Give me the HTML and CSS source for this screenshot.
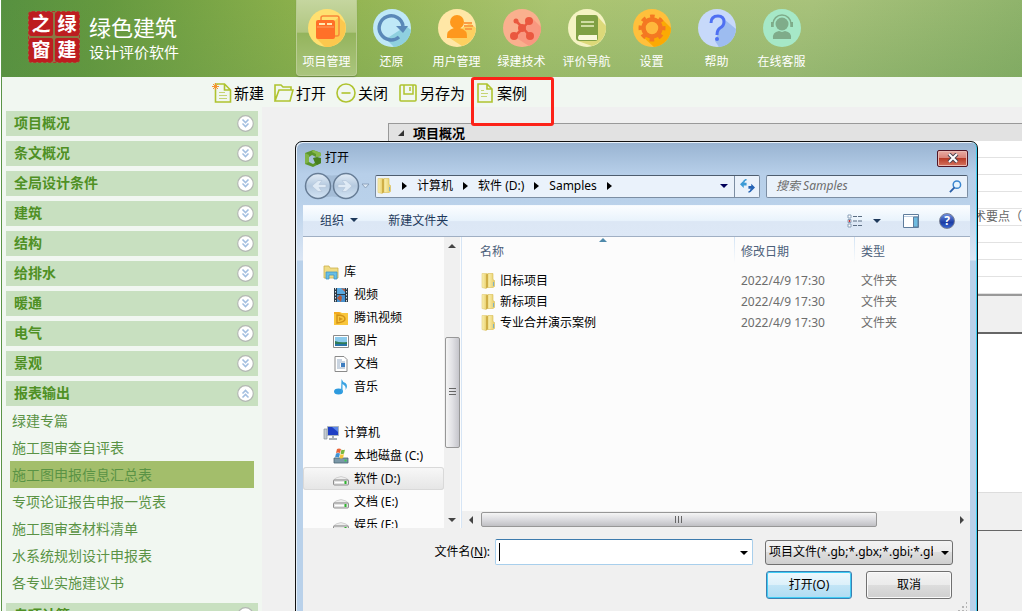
FILE: index.html
```html
<!DOCTYPE html>
<html lang="zh-CN">
<head>
    <meta charset="UTF-8">
    <meta name="viewport" content="width=device-width, initial-scale=1.0">
    <title>绿色建筑设计评价软件</title>
    <link rel="stylesheet" href="styles.css">
</head>
<body>
    <!-- shared icons -->
    <svg class="defs" width="0" height="0" aria-hidden="true">
        <linearGradient id="folderFill" x1="0" x2="1">
            <stop offset="0" stop-color="#fbf2b4"/>
            <stop offset="1" stop-color="#e6cb66"/>
        </linearGradient>
        <linearGradient id="orbFill" x1="0" y1="0" x2="0" y2="1">
            <stop offset="0" stop-color="#e3edf7"/>
            <stop offset="0.5" stop-color="#b4c9df"/>
            <stop offset="1" stop-color="#d4e4f4"/>
        </linearGradient>
        <symbol id="down" viewBox="0 0 17 17">
            <circle cx="8.500" cy="8.500" r="7.800" fill="#fff" stroke="#b4b8b4" stroke-width="1.200"/>
            <path d="M5.500 4.500l3 3 3-3M5.500 8.500l3 3 3-3" fill="none" stroke="#a3bfe0" stroke-width="1.600"/>
        </symbol>
        <symbol id="up" viewBox="0 0 17 17">
            <circle cx="8.500" cy="8.500" r="7.800" fill="#fff" stroke="#b4b8b4" stroke-width="1.200"/>
            <path d="M5.500 8.500l3-3 3 3M5.500 12.500l3-3 3 3" fill="none" stroke="#a3bfe0" stroke-width="1.600"/>
        </symbol>
        <symbol id="folder" viewBox="0 0 16 16">
            <path d="M2 .5h5v14l-1 1-4-1z" fill="url(#folderFill)" stroke="#e0cb74" stroke-width=".6"/>
            <path d="M8 .5h5v6l1.500 1v6l-1.500 1H8z" fill="url(#folderFill)" stroke="#d9bc52" stroke-width=".6"/>
            <path d="M6 1.500l2-1v14l-2 1z" fill="#cfae46"/>
            <path d="M13.500 9v4" stroke="#7fb2c4"/>
        </symbol>
        <symbol id="drive" viewBox="0 0 16 16">
            <path d="M3 7q5-3 10 0l2.500 2H.5z" fill="#eee" stroke="#bbb" stroke-width=".6"/>
            <rect x=".5" y="9" width="15" height="5" rx="1" fill="#e4e4e4" stroke="#777" stroke-width=".8"/>
            <path d="M2 11.500h9" stroke="#fff"/>
            <path d="M12.500 10v3" stroke="#2db52d" stroke-width="2"/>
        </symbol>
    </svg>

    <div class="app">
        <header class="header">
            <div class="brand">
                <div class="seal"><span>之</span><span>绿</span><span>窗</span><span>建</span></div>
                <div class="brand-text">
                    <div class="brand-name">绿色建筑</div>
                    <div class="brand-sub">设计评价软件</div>
                </div>
            </div>
            <nav class="nav">
                <button type="button" class="nav-item active">
                    <svg viewBox="0 0 38 38"><circle cx="19" cy="19" r="19" fill="#ffe070"/><path d="M31 8l6 6a19 19 0 0 1-20 24l-9-9z" fill="#fcc84e"/><rect x="13" y="7" width="18" height="20" rx="2" fill="none" stroke="#f9873a" stroke-width="1.500"/><rect x="8" y="11" width="19" height="19" rx="2" fill="#ff7028"/><path d="M11 15h6M19 15h5" stroke="#ffe9b0" stroke-width="2"/><path d="M9 18h17" stroke="#fca060"/></svg>
                    <span>项目管理</span>
                </button>
                <button type="button" class="nav-item">
                    <svg viewBox="0 0 38 38"><circle cx="19" cy="19" r="19" fill="#bfe8f7"/><path d="M33 17l5 4a19 19 0 0 1-17 17l-8-8z" fill="#8fd0df"/><path d="M26 28a12 12 0 1 1 4-11" fill="none" stroke="#5a88b8" stroke-width="3.500"/><path d="M23 17h12l-5 7z" fill="#5a88b8"/></svg>
                    <span>还原</span>
                </button>
                <button type="button" class="nav-item">
                    <svg viewBox="0 0 38 38"><circle cx="19" cy="19" r="19" fill="#ffe7a6"/><path d="M32 14l6 5a19 19 0 0 1-14 18l-14-9z" fill="#fdd060"/><circle cx="19" cy="13" r="7" fill="#fe981d"/><path d="M9 29q-1-8 7-10h6q8 2 7 10z" fill="#fe981d"/><path d="M26 14h8M26 17h9M27 20h7" stroke="#fb9d45" stroke-width="2"/></svg>
                    <span>用户管理</span>
                </button>
                <button type="button" class="nav-item">
                    <svg viewBox="0 0 38 38"><circle cx="19" cy="19" r="19" fill="#fab08e"/><path d="M30 10l8 8a19 19 0 0 1-12 19l-14-9z" fill="#f99880"/><path d="M14 13l6 6 7-8M20 19l7 8M20 19l-8 8" fill="none" stroke="#ea583f" stroke-width="2.500"/><g fill="#ea583f"><circle cx="13" cy="12" r="2.500"/><circle cx="26" cy="12" r="4"/><circle cx="19" cy="19" r="4"/><circle cx="11" cy="27" r="4"/><circle cx="27" cy="27" r="4"/></g></svg>
                    <span>绿建技术</span>
                </button>
                <button type="button" class="nav-item">
                    <svg viewBox="0 0 38 38"><circle cx="19" cy="19" r="19" fill="#f5f3c3"/><path d="M30 8l8 9a19 19 0 0 1-14 20l-14-5z" fill="#dcd979"/><rect x="8" y="6" width="22" height="26" rx="3" fill="#80a044"/><path d="M13 13h13M13 17h13" stroke="#e9efc1" stroke-width="1.500"/><path d="M11 26h18v5H11q-2-2 0-5z" fill="#faf8dc"/></svg>
                    <span>评价导航</span>
                </button>
                <button type="button" class="nav-item">
                    <svg viewBox="0 0 38 38"><circle cx="19" cy="19" r="19" fill="#ffc03c"/><path d="M28 9l10 10a19 19 0 0 1-17 19L10 28z" fill="#fbaa04"/><circle cx="19" cy="19" r="8.500" fill="#ffb83c" stroke="#f47822" stroke-width="4.500"/><circle cx="19" cy="19" r="11.500" fill="none" stroke="#f47822" stroke-width="4" stroke-dasharray="4.500 4.530" stroke-dashoffset="2.250"/></svg>
                    <span>设置</span>
                </button>
                <button type="button" class="nav-item">
                    <svg viewBox="0 0 38 38"><circle cx="19" cy="19" r="19" fill="#c7d9fa"/><path d="M26 10l12 10a19 19 0 0 1-17 18l-4-6z" fill="#9dbcf0"/><path d="M13 14q0-7 7-7 6 0 6 6 0 4-4 6-3 2-3 7" fill="none" stroke="#4f70f2" stroke-width="3"/><circle cx="19" cy="30" r="2" fill="#4f70f2"/></svg>
                    <span>帮助</span>
                </button>
                <button type="button" class="nav-item">
                    <svg viewBox="0 0 38 38"><circle cx="19" cy="19" r="19" fill="#a6e8c7"/><circle cx="19" cy="15" r="6.500" fill="#7fac8a"/><path d="M10 18v-3a9 9 0 0 1 18 0v3" fill="none" stroke="#7fac8a" stroke-width="1.500"/><path d="M9 13v5M29 13v5" stroke="#7fac8a" stroke-width="2"/><path d="M10 30q-1-7 6-8l3 1 3-1q7 1 6 8z" fill="#7fac8a"/></svg>
                    <span>在线客服</span>
                </button>
            </nav>
        </header>

        <div class="toolbar">
            <button type="button" class="tool">
                <svg viewBox="0 0 20 20"><path d="M3.500 1h9l6 6v12h-15zM12.500 1v6h6" fill="none" stroke="#afc32f" stroke-width="1.600"/><path d="M7 9.500h6M7 12.500h8M7 15.500h8" stroke="#c6d472"/><path d="M3.500 0v7M0 3.500h7M1 1l5 5M6 1L1 6" stroke="#f59331"/></svg>
                <span>新建</span>
            </button>
            <button type="button" class="tool">
                <svg viewBox="0 0 20 20"><path d="M1 18V2h6l2 2h8v3M1 18l4-11h14l-3 11z" fill="none" stroke="#afc32f" stroke-width="1.600"/></svg>
                <span>打开</span>
            </button>
            <button type="button" class="tool">
                <svg viewBox="0 0 20 20"><circle cx="10" cy="10" r="9" fill="none" stroke="#afc32f" stroke-width="1.600"/><path d="M5.500 10h9" stroke="#afc32f" stroke-width="1.600"/></svg>
                <span>关闭</span>
            </button>
            <button type="button" class="tool">
                <svg viewBox="0 0 20 20"><rect x="2" y="2" width="16" height="16" rx="1" fill="none" stroke="#afc32f" stroke-width="1.600"/><path d="M6 2v9h9V2M12 4v4" fill="none" stroke="#afc32f" stroke-width="1.500"/></svg>
                <span>另存为</span>
            </button>
            <button type="button" class="tool marked">
                <svg viewBox="0 0 20 20"><path d="M3 1h9l5 5v13H3zM12 1v5h5" fill="none" stroke="#afc32f" stroke-width="1.600"/><path d="M6 10.500h7M6 13.500h6M6 7.500h3" stroke="#c6d472"/></svg>
                <span>案例</span>
            </button>
        </div>

        <div class="content">
            <aside class="sidebar">
                <button type="button" class="group">项目概况<svg><use href="#down"/></svg></button>
                <button type="button" class="group">条文概况<svg><use href="#down"/></svg></button>
                <button type="button" class="group">全局设计条件<svg><use href="#down"/></svg></button>
                <button type="button" class="group">建筑<svg><use href="#down"/></svg></button>
                <button type="button" class="group">结构<svg><use href="#down"/></svg></button>
                <button type="button" class="group">给排水<svg><use href="#down"/></svg></button>
                <button type="button" class="group">暖通<svg><use href="#down"/></svg></button>
                <button type="button" class="group">电气<svg><use href="#down"/></svg></button>
                <button type="button" class="group">景观<svg><use href="#down"/></svg></button>
                <button type="button" class="group">报表输出<svg><use href="#up"/></svg></button>
                <ul class="reports">
                    <li><a href="#">绿建专篇</a></li>
                    <li><a href="#">施工图审查自评表</a></li>
                    <li><a href="#" class="selected">施工图申报信息汇总表</a></li>
                    <li><a href="#">专项论证报告申报一览表</a></li>
                    <li><a href="#">施工图审查材料清单</a></li>
                    <li><a href="#">水系统规划设计申报表</a></li>
                    <li><a href="#">各专业实施建议书</a></li>
                </ul>
                <button type="button" class="group">专项计算<svg><use href="#down"/></svg></button>
            </aside>

            <main class="main">
                <div class="props-title"><svg viewBox="0 0 8 8"><path d="M7 1v6H1z" fill="#333"/></svg>项目概况</div>
                <div class="props">
                    <div class="prop"></div>
                    <div class="prop"></div>
                    <div class="prop"></div>
                    <div class="prop"></div>
                    <div class="prop">术要点（</div>
                    <div class="prop"></div>
                    <div class="prop"></div>
                    <div class="prop"></div>
                    <div class="prop"></div>
                </div>
                <div class="props-info"></div>
                <div class="notes"></div>
                <div class="notes-foot"></div>
            </main>
        </div>
    </div>

    <!-- file open dialog -->
    <section class="dialog" role="dialog" aria-labelledby="dialogTitle">
        <div class="titlebar">
            <svg viewBox="0 0 18 18"><path d="M1 4l8-3 8 3v3l-5 1-4-2-3 2v5l4 2 3-2v-2h5v3l-8 4-8-3z" fill="#5c962c"/><path d="M1 4l4 2v7l-4 2z" fill="#7fb347"/><path d="M9 1l8 3v3l-5 1V5L8 3z" fill="#86b94a"/><path d="M9 9l4-1 4 1v5l-4 2-2-2z" fill="#47801f"/></svg>
            <span id="dialogTitle">打开</span>
            <button type="button" class="close" aria-label="关闭">
                <svg viewBox="0 0 12 10"><path d="M2 1l8 8M10 1L2 9" stroke="#4b4350" stroke-width="4"/><path d="M2 1l8 8M10 1L2 9" stroke="#fff" stroke-width="2"/></svg>
            </button>
        </div>

        <div class="location">
            <svg class="orbs" viewBox="0 0 64 28">
                <path d="M14 1q14 5 28 0v26q-14-5-28 0z" fill="#a5bdd7"/>
                <circle cx="14" cy="14" r="12.500" fill="url(#orbFill)" stroke="#677d96" stroke-width="1.500"/>
                <circle cx="42" cy="14" r="12.500" fill="url(#orbFill)" stroke="#677d96" stroke-width="1.500"/>
                <path d="M22 12.500h-7l3-4h-4l-6 5.500 6 5.500h4l-3-4h7z" fill="#dfeaf5" stroke="#b4c6da" stroke-width=".7"/>
                <path d="M34 12.500h7l-3-4h4l6 5.500-6 5.500h-4l3-4h-7z" fill="#dfeaf5" stroke="#b4c6da" stroke-width=".7"/>
                <path d="M58 12h7l-3.500 4z" fill="#dce8f4" stroke="#8298b2" stroke-width=".8"/>
            </svg>
            <div class="address">
                <svg class="icon"><use href="#folder"/></svg>
                <i class="crumb-arrow"></i><a href="#">计算机</a>
                <i class="crumb-arrow"></i><a href="#">软件 (D:)</a>
                <i class="crumb-arrow"></i><a href="#">Samples</a>
                <i class="crumb-arrow"></i>
                <i class="caret address-caret"></i>
                <button type="button" class="refresh" aria-label="刷新">
                    <svg viewBox="0 0 16 14"><path d="M0 5l4-4v2.500h3v3H4V9z" fill="#3c9bd6"/><path d="M4 3.500q0-3 3-3.500" fill="none" stroke="#3c9bd6" stroke-width="1.500"/><path d="M16 8.500l-4-4v2.500H9v3h3v2.500z" fill="#2563b5"/><path d="M12 10q0 3-3 3.500" fill="none" stroke="#2563b5" stroke-width="1.500"/></svg>
                </button>
            </div>
            <div class="search">
                <input type="text" placeholder="搜索 Samples" aria-label="搜索 Samples">
                <svg viewBox="0 0 14 14"><circle cx="8.500" cy="5" r="4" fill="#e7f4fd" stroke="#3a86cf" stroke-width="1.600"/><path d="M6 8l-5 5" stroke="#2a5fa8" stroke-width="2"/></svg>
            </div>
        </div>

        <div class="commands">
            <button type="button">组织 <i class="caret"></i></button>
            <button type="button">新建文件夹</button>
            <span class="spacer"></span>
            <button type="button" class="views" aria-label="更改视图">
                <svg viewBox="0 0 16 14"><path d="M1 1h3v3H1zM1 5.500h3v3H1zM1 10h3v3H1z" fill="#fff" stroke="#8aa0b8"/><path d="M2 6.500h1v1H2z" fill="#c33" stroke="#c33"/><path d="M6 2.500h4M11 2.500h4M6 7h4M11 7h4M6 11.500h4M11 11.500h4" stroke="#5b6d82"/></svg>
                <i class="caret"></i>
            </button>
            <button type="button" aria-label="显示预览窗格">
                <svg viewBox="0 0 16 14"><path d="M.5 .5h15v13H.5z" fill="#fff" stroke="#5f7c9c"/><path d="M1 2.500h14" stroke="#b9cbe0"/><path d="M10.500 3h4.500v10h-4.500z" fill="#6ebbe0" stroke="#5f7c9c"/></svg>
            </button>
            <button type="button" class="help" aria-label="帮助">?</button>
        </div>

        <div class="browser">
            <div class="tree">
                <ul class="nodes">
                    <li class="root"><svg class="icon" viewBox="0 0 16 16"><path d="M1 2h5l1 2h8v10H1z" fill="#efdc85" stroke="#cdb04a" stroke-width=".8"/><path d="M3 15V8h11v7h-3v-4H6v4z" fill="#67bfe6" stroke="#4394c4" stroke-width=".8"/></svg>库</li>
                    <li><svg class="icon" viewBox="0 0 16 16"><path d="M1 1h14v14H1z" fill="#2d3b47"/><path d="M4 1h8v6H4z" fill="#58a9e2"/><path d="M4 8h8v7H4z" fill="#4591d0"/><path d="M4 11l3-3 2 2-1 5zM8 1l4 4V2z" fill="#b65a3a"/><path d="M2.500 1v14M13.500 1v14" stroke="#d9e2e8" stroke-dasharray="1.500 1.500"/></svg>视频</li>
                    <li><svg class="icon" viewBox="0 0 16 16"><path d="M1 2h6l2 1h6v12H1z" fill="#f9c63c"/><path d="M1 2h5l2 2H1z" fill="#f4ab1e"/><path d="M4 5q8 0 8 4 0 3-8 4z" fill="none" stroke="#d39418" stroke-width="1.500"/><path d="M6 7l4 2-4 2z" fill="#d39418"/></svg>腾讯视频</li>
                    <li><svg class="icon" viewBox="0 0 16 16"><path d="M.5 2.500h15v12H.5z" fill="#fff" stroke="#8b8b8b"/><path d="M2 4h12v9H2z" fill="#8ccbed"/><path d="M2 8q5 2 12 1v2H2z" fill="#2f7c58"/><path d="M2 11h12v2H2z" fill="#2874a8"/></svg>图片</li>
                    <li><svg class="icon" viewBox="0 0 16 16"><path d="M2 .5h9l3 3v12H2z" fill="#fff" stroke="#8a8a8a"/><path d="M4 4h5M4 6h8M4 8h3M4 10h3M4 12h8" stroke="#93a9c2"/><path d="M8 7h4v4H8z" fill="#3d7dc0"/></svg>文档</li>
                    <li><svg class="icon" viewBox="0 0 16 16"><ellipse cx="5.500" cy="12.500" rx="4.500" ry="3" fill="#2d9ade"/><path d="M8.500 0q1 3 4 4 3 3 0 7 1-4-3-6v8H8z" fill="#3aa3e2"/></svg>音乐</li>
                </ul>
                <ul class="nodes">
                    <li class="root"><svg class="icon" viewBox="0 0 16 16"><path d="M1 4h3v10H1z" fill="#c5cbd1" stroke="#88929c" stroke-width=".7"/><path d="M4.500 1.500h11v9h-11z" fill="#1f3fc4" stroke="#aab4be"/><path d="M9 2h6v5z" fill="#5a86e8"/><path d="M9 11h2v2h3v2H6v-2h3z" fill="#a7aeb5"/></svg>计算机</li>
                    <li><svg class="icon" viewBox="0 0 16 16"><path d="M1 10h14v5H1z" fill="#7b98a8" stroke="#4a6474" stroke-width=".8"/><path d="M12.500 11.500v2" stroke="#39cf4c" stroke-width="2"/><path d="M4 1q2-1 4 0L7 5q-2-1-4 0z" fill="#e8653a"/><path d="M8.500 1.500q2 1 3.500 0l-1 4q-2 1-3.500 0z" fill="#78b83e"/><path d="M3 5.500q2-1 4 0L6 9.500q-2-1-4 0z" fill="#3e92d4"/><path d="M7.500 6q2 1 3.500 0l-1 4q-2 1-3.500 0z" fill="#f4c63a"/></svg>本地磁盘 (C:)</li>
                    <li class="current"><svg class="icon"><use href="#drive"/></svg>软件 (D:)</li>
                    <li><svg class="icon"><use href="#drive"/></svg>文档 (E:)</li>
                    <li><svg class="icon"><use href="#drive"/></svg>娱乐 (F:)</li>
                </ul>
            </div>
            <div class="vscroll">
                <i class="arrow-up"></i>
                <div class="thumb"></div>
                <i class="arrow-down"></i>
            </div>
            <div class="files">
                <table>
                    <thead>
                        <tr><th class="col-name">名称<i class="sort"></i></th><th class="col-date">修改日期</th><th>类型</th></tr>
                    </thead>
                    <tbody>
                        <tr><td><div class="file"><svg class="icon"><use href="#folder"/></svg>旧标项目</div></td><td>2022/4/9 17:30</td><td>文件夹</td></tr>
                        <tr><td><div class="file"><svg class="icon"><use href="#folder"/></svg>新标项目</div></td><td>2022/4/9 17:30</td><td>文件夹</td></tr>
                        <tr><td><div class="file"><svg class="icon"><use href="#folder"/></svg>专业合并演示案例</div></td><td>2022/4/9 17:30</td><td>文件夹</td></tr>
                    </tbody>
                </table>
                <div class="hscroll">
                    <i class="arrow-left"></i>
                    <div class="thumb"></div>
                    <i class="arrow-right"></i>
                </div>
            </div>
        </div>

        <form class="footer">
            <div class="row">
                <label for="filename">文件名(<u>N</u>):</label>
                <div class="combo">
                    <input type="text" id="filename" name="filename">
                    <button type="button" aria-label="最近的文件"><i class="caret"></i></button>
                </div>
                <div class="filter">
                    <select name="filter" aria-label="文件类型">
                        <option>项目文件(*.gb;*.gbx;*.gbi;*.gbp)</option>
                    </select>
                    <i class="caret"></i>
                </div>
            </div>
            <div class="row actions">
                <button type="submit" class="btn primary">打开(O)</button>
                <button type="button" class="btn">取消</button>
            </div>
            <i class="grip"></i>
        </form>
    </section>
</body>
</html>
```

FILE: styles.css
```css
*, *::before, *::after {
    box-sizing: border-box;
}
body {
    margin: 0;
    height: 100vh;
    overflow: hidden;
    position: relative;
    font-family: "Noto Sans", "Noto Sans CJK SC", sans-serif;
    font-size: 12px;
    line-height: 16px;
    color: #000;
}
button, input, select {
    font: inherit;
    color: inherit;
    margin: 0;
}
button {
    border: none;
    background: none;
    padding: 0;
}
a {
    color: inherit;
    text-decoration: none;
}
ul {
    list-style: none;
    margin: 0;
    padding: 0;
}
.defs {
    position: absolute;
}
.icon {
    width: 16px;
    height: 16px;
    flex: none;
}

/* application window */
.app {
    display: flex;
    flex-direction: column;
    height: 100%;
    margin-left: 1px;
    border-left: 1px solid #5b9447;
    background: #f1f7f1;
}
.header {
    display: flex;
    flex: none;
    height: 77px;
    background: linear-gradient(rgba(80, 140, 70, 0), rgba(80, 140, 70, 0.2)), linear-gradient(105deg, #579140 0%, #65993f 10%, #8fb24d 30%, #abc470 53%, #a8c27b 78%, #8db26a 100%);
}
.brand {
    display: flex;
    flex: none;
    width: 294px;
    padding: 11px 0 0 26px;
    gap: 9px;
    color: #fff;
}
.seal {
    display: grid;
    grid-template-columns: 24px 24px;
    grid-auto-rows: 24px;
    gap: 2px;
    width: 52px;
    height: 52px;
    padding: 0;
    border: 1px dashed #b4342a;
    border-radius: 4px;
    background: #8a7a45;
}
.seal span {
    background: #bd1d20;
    border-radius: 2px;
    font-size: 19px;
    line-height: 24px;
    font-weight: bold;
    text-align: center;
}
.brand-name {
    font-size: 22px;
    line-height: 32px;
}
.brand-sub {
    font-size: 15px;
    line-height: 18px;
}
.nav {
    display: flex;
    gap: 4px;
}
.nav-item {
    display: flex;
    flex-direction: column;
    align-items: center;
    width: 61px;
    height: 76px;
    padding-top: 9px;
    gap: 7px;
    color: #fff;
    white-space: nowrap;
}
.nav-item svg {
    width: 38px;
    height: 38px;
    flex: none;
}
.nav-item.active {
    border: 1px solid #b9cc93;
    border-top: none;
    border-radius: 0 0 4px 4px;
    background: linear-gradient(#c5d69f 0%, #b0c680 43%, #94b45c 44%, #aac57e 100%);
    box-shadow: 0 1px 1px #6d8c44;
}
.toolbar {
    display: flex;
    flex: none;
    gap: 10px;
    height: 30px;
    padding-left: 210px;
}
.tool {
    display: flex;
    align-items: center;
    gap: 2px;
    font-size: 15px;
    height: 32px;
    position: relative;
}
.tool svg {
    width: 20px;
    height: 20px;
}
.marked::after {
    content: "";
    position: absolute;
    top: 0;
    left: -4px;
    width: 83px;
    height: 49px;
    border: 3px solid #fc2218;
    border-radius: 3px;
}
.content {
    display: flex;
    flex: 1;
    min-height: 0;
}

/* sidebar */
.sidebar {
    width: 260px;
    flex: none;
    padding: 4px 4px 0;
    overflow: hidden;
}
.group {
    display: flex;
    justify-content: space-between;
    align-items: center;
    width: 100%;
    height: 25px;
    margin-bottom: 5px;
    padding: 0 4px 1px 8px;
    background: #c8e0c0;
    color: #4f9024;
    font-size: 14px;
    font-weight: bold;
}
.group svg {
    width: 17px;
    height: 17px;
}
.reports {
    margin: -4px 4px 7px;
    font-size: 14px;
    color: #5a9345;
}
.reports a {
    display: block;
    height: 27px;
    padding-left: 2px;
    line-height: 27px;
}
.reports .selected {
    background: #a3be6b;
}

/* property area */
.main {
    display: flex;
    flex-direction: column;
    flex: 1;
    min-width: 0;
    padding: 16px 0 0 126px;
    background: #f0f0f0;
}
.props-title {
    display: flex;
    align-items: center;
    gap: 8px;
    flex: none;
    height: 18px;
    padding-left: 8px;
    border-top: 1px solid #999;
    border-left: 1px solid #999;
    background: #e2e2e2;
    font-size: 13px;
    line-height: 16px;
    font-weight: bold;
}
.props-title svg {
    width: 8px;
    height: 8px;
}
.props {
    border-bottom: 2px solid #999;
    background: #fff;
}
.prop {
    height: 17px;
    border-bottom: 1px solid #e2e2e2;
    text-align: right;
    color: #666;
}
.props-info {
    flex: none;
    height: 38px;
    border-bottom: 2px solid #666;
}
.notes {
    flex: none;
    height: 159px;
    background: #fff;
    border-bottom: 1px solid #ddd;
}
.notes-foot {
    flex: none;
    height: 38px;
    border-bottom: 1px solid #666;
}

/* dialog */
.dialog {
    position: absolute;
    top: 141px;
    left: 295px;
    right: 44px;
    bottom: -8px;
    display: flex;
    flex-direction: column;
    padding: 0 7px 7px;
    border: 1px solid #111;
    border-radius: 7px;
    background: linear-gradient(#98b3d1 0, #b7cfe9 32px, #b9d1ea 60px, #dbe6f4 118px, #b9d1ea 119px);
    box-shadow: inset 1px 1px 0 #e8f1fa, inset -1px 0 0 #3fd0f2;
}
.titlebar {
    display: flex;
    align-items: center;
    gap: 3px;
    flex: none;
    height: 32px;
    padding-left: 1px;
}
.titlebar > svg {
    width: 18px;
    height: 18px;
}
.close {
    display: flex;
    align-items: center;
    justify-content: center;
    width: 31px;
    height: 17px;
    margin: 0 2px 0 auto;
    border: 1px solid #521525;
    border-radius: 2px;
    background: linear-gradient(#e9aca3 0%, #d98378 48%, #b83c28 50%, #d5745f 100%);
    box-shadow: inset 0 0 0 1px #e9b9b2;
}
.close svg {
    width: 12px;
    height: 10px;
}
.location {
    display: flex;
    align-items: center;
    flex: none;
    height: 31px;
    padding: 0 2px 7px 0;
}
.orbs {
    width: 64px;
    height: 28px;
    margin-right: 7px;
    margin-left: 1px;
    flex: none;
    overflow: visible;
}
.address, .search {
    display: flex;
    align-items: center;
    height: 23px;
    border: 1px solid #7c8ea3;
    border-top-color: #4e5d6e;
    border-radius: 2px;
    background: #eaf2fb;
}
.address {
    flex: 1;
    min-width: 0;
    margin-right: 6px;
    white-space: nowrap;
}
.crumb-arrow {
    margin: 0 10px;
    border: 4px solid transparent;
    border-left: 5px solid #000;
    border-right: none;
}
.caret {
    display: inline-block;
    border: 4px solid transparent;
    border-top: 4px solid currentColor;
    border-bottom: none;
}
.address-caret {
    margin: 0 6px 0 auto;
    color: #00005a;
}
.refresh {
    width: 25px;
    height: 21px;
    border-left: 1px solid #7c8ea3;
}
.refresh svg {
    display: block;
    width: 15px;
    height: 14px;
    margin: 0 auto;
}
.search {
    width: 202px;
    flex: none;
    padding: 0 5px 0 9px;
}
.search input {
    flex: 1;
    min-width: 0;
    padding: 0;
    border: none;
    background: none;
    font-style: italic;
}
.search input::placeholder {
    color: #6d6d6d;
}
.search svg {
    width: 13px;
    height: 13px;
}
.commands {
    display: flex;
    align-items: center;
    flex: none;
    height: 32px;
    padding: 0 15px 0 17px;
    gap: 20px;
    border-top: 1px solid #f5fafe;
    border-bottom: 1px solid #a0afc3;
    background: linear-gradient(#fbfdff 0%, #e9f3fc 48%, #dce7f5 52%, #dde8f6 100%);
    color: #1e395b;
}
.commands .caret {
    margin: 0 10px 3px 3px;
}
.commands svg {
    display: block;
    width: 16px;
    height: 14px;
}
.spacer {
    flex: 1;
}
.commands .views {
    display: flex;
    align-items: center;
    gap: 10px;
}
.commands .views .caret {
    margin: 0 2px 0 0;
}
.commands .help {
    width: 16px;
    height: 16px;
    border: 1px solid #777f95;
    border-radius: 50%;
    background: linear-gradient(#6f8fe0, #1b3ca4 60%, #3a66cf);
    color: #fff;
    font-weight: bold;
    line-height: 14px;
}
.browser {
    display: flex;
    flex: 1;
    min-height: 0;
    background: #fcfcfc;
}
.tree {
    width: 141px;
    flex: none;
    padding-top: 23px;
    overflow: hidden;
    white-space: nowrap;
}
.nodes + .nodes {
    margin-top: 23px;
}
.nodes li {
    display: flex;
    align-items: center;
    gap: 5px;
    height: 23px;
    padding-left: 30px;
}
.nodes .root {
    padding-left: 20px;
}
.nodes .current {
    background: linear-gradient(#f8f8f8, #e5e5e5);
    box-shadow: inset 0 0 0 1px #d9d9d9;
    border-radius: 3px;
}
.vscroll {
    display: flex;
    flex-direction: column;
    align-items: center;
    width: 16px;
    flex: none;
    padding: 7px 0 6px;
    background: #f0f0f0;
}
.vscroll .thumb {
    width: 15px;
    height: 111px;
    margin: auto 0 70px;
    border: 1px solid #979797;
    border-radius: 2px;
    background: repeating-linear-gradient(#666 0 1px, transparent 1px 3px) center / 7px 9px no-repeat, linear-gradient(90deg, #f5f5f5, #e0e0e4 50%, #c5c5cb);
}
.arrow-up, .arrow-down {
    border: 4px solid transparent;
}
.arrow-up {
    border-top: none;
    border-bottom-color: #444;
}
.arrow-down {
    border-bottom: none;
    border-top-color: #444;
}
.files {
    display: flex;
    flex-direction: column;
    justify-content: space-between;
    flex: 1;
    min-width: 0;
    margin-left: 1px;
    border-left: 1px solid #d6e5f5;
}
.files table {
    width: 100%;
    table-layout: fixed;
    border-collapse: collapse;
}
.files th {
    height: 26px;
    padding: 3px 0 0 6px;
    color: #4c607a;
    font-weight: normal;
    text-align: left;
    background: linear-gradient(#d3e4f5, #fcfcfc) right / 1px 100% no-repeat;
}
.files th:last-child {
    background: none;
}
.files .col-name {
    position: relative;
    width: 273px;
    padding-left: 18px;
}
.col-date {
    width: 120px;
}
.sort {
    position: absolute;
    top: 1px;
    left: 50%;
    border: 4px solid transparent;
    border-top: none;
    border-bottom-color: #4f8aab;
}
.files td {
    height: 21px;
    padding: 0 0 0 6px;
    color: #6d6d6d;
}
.files tbody::before {
    content: "";
    display: block;
    height: 7px;
}
.files td:first-child {
    padding-left: 18px;
    color: #000;
}
.file {
    display: flex;
    align-items: center;
    gap: 4px;
}
.hscroll {
    display: flex;
    align-items: center;
    height: 17px;
    padding: 0 6px 0 7px;
    background: #f0f0f0;
}
.hscroll .thumb {
    width: 80%;
    height: 15px;
    margin: 0 auto 0 8px;
    border: 1px solid #979797;
    border-radius: 2px;
    background: repeating-linear-gradient(90deg, #666 0 1px, transparent 1px 3px) center / 9px 7px no-repeat, linear-gradient(#f5f5f5, #dcdce0 50%, #c0c0c4);
}
.arrow-left, .arrow-right {
    border: 4px solid transparent;
}
.arrow-left {
    border-left: none;
    border-right-color: #444;
}
.arrow-right {
    border-right: none;
    border-left-color: #444;
}
.footer {
    position: relative;
    flex: none;
    padding: 11px 17px 12px 0;
    background: #f0f0f0;
}
.row {
    display: flex;
    align-items: center;
}
.row label {
    width: 187px;
    margin-right: 5px;
    flex: none;
    text-align: right;
}
.combo {
    display: flex;
    flex: 1;
    min-width: 0;
    height: 26px;
    margin-right: 12px;
    border: 1px solid #a8cfec;
    border-top-color: #3d7bad;
    border-radius: 2px;
    background: #fff;
}
.combo input {
    flex: 1;
    min-width: 0;
    border: none;
    background: linear-gradient(#000, #000) 3px center / 1px 18px no-repeat;
}
.combo button {
    width: 16px;
}
.combo .caret {
    vertical-align: middle;
}
.filter {
    position: relative;
    width: 188px;
    flex: none;
}
.filter select {
    appearance: none;
    display: block;
    width: 100%;
    height: 25px;
    padding: 0 19px 0 3px;
    border: 1px solid #707070;
    border-radius: 3px;
    background: linear-gradient(#f3f3f3 0%, #ebebeb 49%, #dddddd 50%, #cfcfcf 100%);
}
.filter .caret {
    position: absolute;
    top: 11px;
    right: 4px;
}
.actions {
    justify-content: flex-end;
    gap: 14px;
    margin-top: 6px;
    padding-right: 1px;
}
.btn {
    width: 86px;
    height: 28px;
    border: 1px solid #707070;
    border-radius: 3px;
    background: linear-gradient(#f3f3f3 0%, #ebebeb 49%, #dddddd 50%, #cfcfcf 100%);
    box-shadow: inset 0 0 0 1px #fafafa;
}
.btn.primary {
    border-color: #3c7fb1;
    background: linear-gradient(#eef8fd 0%, #dcf0fa 49%, #c3e5f6 50%, #b0dcf3 100%);
    box-shadow: inset 0 0 0 1px #3fcdf5;
}
.grip {
    position: absolute;
    right: 3px;
    bottom: 0;
    width: 10px;
    height: 10px;
    background: radial-gradient(circle, #b5b5b5 1px, transparent 1px) 0 0 / 4px 4px;
    clip-path: polygon(100% 0, 100% 100%, 0 100%);
}
```
